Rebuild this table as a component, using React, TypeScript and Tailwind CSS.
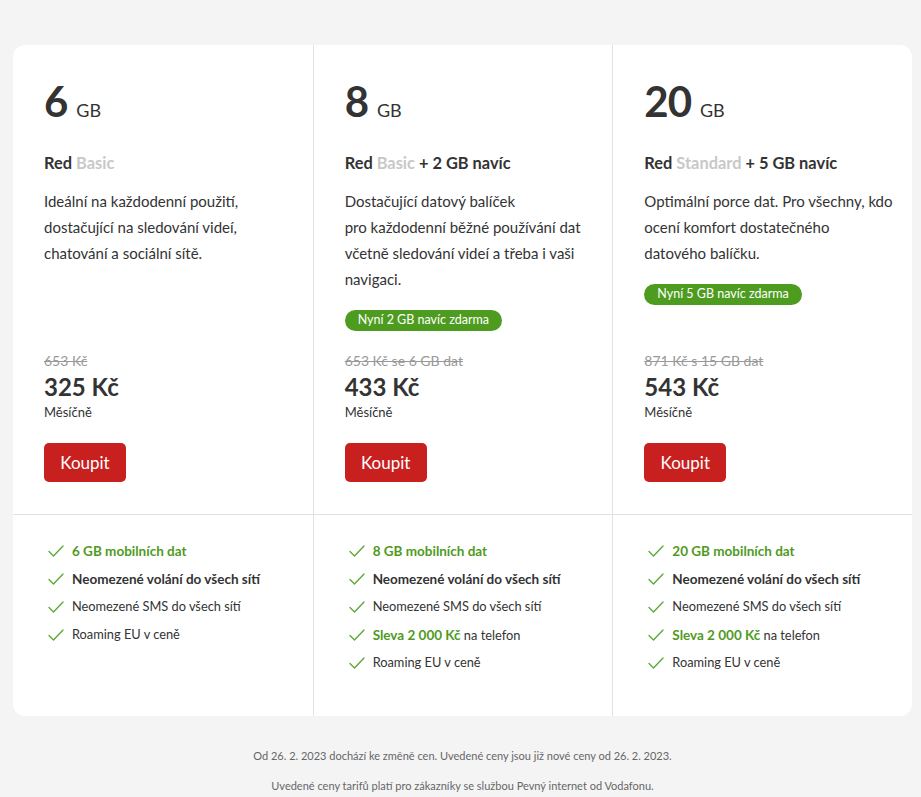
const plans = [
  {
    gb: "6",
    tier: "Basic",
    extra: "",
    desc: ["Ideální na každodenní použití,", "dostačující na sledování videí,", "chatování a sociální sítě."],
    pill: "",
    oldPrice: "653 Kč",
    price: "325 Kč",
    features: [
      { green: "6 GB mobilních dat", rest: "", bold: false },
      { green: "", rest: "Neomezené volání do všech sítí", bold: true },
      { green: "", rest: "Neomezené SMS do všech sítí", bold: false },
      { green: "", rest: "Roaming EU v ceně", bold: false },
    ],
  },
  {
    gb: "8",
    tier: "Basic",
    extra: " + 2 GB navíc",
    desc: ["Dostačující datový balíček", "pro každodenní běžné používání dat", "včetně sledování videí a třeba i vaši", "navigaci."],
    pill: "Nyní 2 GB navíc zdarma",
    oldPrice: "653 Kč se 6 GB dat",
    price: "433 Kč",
    features: [
      { green: "8 GB mobilních dat", rest: "", bold: false },
      { green: "", rest: "Neomezené volání do všech sítí", bold: true },
      { green: "", rest: "Neomezené SMS do všech sítí", bold: false },
      { green: "Sleva 2 000 Kč", rest: " na telefon", bold: false },
      { green: "", rest: "Roaming EU v ceně", bold: false },
    ],
  },
  {
    gb: "20",
    tier: "Standard",
    extra: " + 5 GB navíc",
    desc: ["Optimální porce dat. Pro všechny, kdo", "ocení komfort dostatečného", "datového balíčku."],
    pill: "Nyní 5 GB navíc zdarma",
    oldPrice: "871 Kč s 15 GB dat",
    price: "543 Kč",
    features: [
      { green: "20 GB mobilních dat", rest: "", bold: false },
      { green: "", rest: "Neomezené volání do všech sítí", bold: true },
      { green: "", rest: "Neomezené SMS do všech sítí", bold: false },
      { green: "Sleva 2 000 Kč", rest: " na telefon", bold: false },
      { green: "", rest: "Roaming EU v ceně", bold: false },
    ],
  },
];

function Check() {
  return (
    <svg width="16" height="12" viewBox="0 0 16 12" fill="none" className="shrink-0">
      <path d="M1 6.5 L5.5 11 L15 1" stroke="#5fa83a" strokeWidth="1.4" strokeLinecap="round" strokeLinejoin="round" />
    </svg>
  );
}

export default function App() {
  return (
    <div className="min-h-screen bg-[#f4f4f4] pt-[45px] px-[13px] pr-[9px] font-['Lato','Open_Sans',sans-serif] text-[#333]">
      <div className="bg-white rounded-[12px] grid grid-cols-3">
        {plans.map((p, i) => (
          <div
            key={"top" + i}
            className={`flex flex-col pl-[31px] pr-4 pt-[35px] pb-[32px] ${i > 0 ? "border-l border-[#e2e2e2]" : ""}`}
          >
            <div className="flex items-baseline gap-[9px]">
              <span className="text-[42px] font-bold leading-none tracking-tight">{p.gb}</span>
              <span className="text-[18px] leading-none">GB</span>
            </div>
            <div className="mt-[29px] text-[16.4px] font-bold leading-6">
              Red <span className="text-[#c8c8c8]">{p.tier}</span>
              {p.extra}
            </div>
            <div className="mt-[13px] text-[15px] leading-[26px]">
              {p.desc.map((l) => (
                <div key={l}>{l}</div>
              ))}
            </div>
            {p.pill && (
              <div className="mt-[18px] self-start rounded-full bg-[#4e9c1f] px-[13px] h-[21px] flex items-center text-[12.5px] text-white">
                {p.pill}
              </div>
            )}
            <div className="mt-auto pt-[20px]">
              <div className="text-[14px] text-[#999] line-through leading-5">{p.oldPrice}</div>
              <div className="text-[24px] font-bold leading-[30px] mt-[1px]">{p.price}</div>
              <div className="text-[13px] leading-5">Měsíčně</div>
              <button className="mt-[21px] h-[39px] w-[82px] rounded-[5px] bg-[#c8201f] text-white text-[17px]">
                Koupit
              </button>
            </div>
          </div>
        ))}
        {plans.map((p, i) => (
          <div
            key={"feat" + i}
            className={`border-t border-[#e2e2e2] pl-[35px] pr-3 pt-[25px] pb-[42px] flex flex-col gap-[6px] ${i > 0 ? "border-l" : ""}`}
          >
            {p.features.map((f, j) => (
              <div key={j} className="flex items-center gap-[8px] h-[22px]">
                <Check />
                <span className={f.bold ? "font-bold text-[13.5px]" : "text-[12.8px]"}>
                  {f.green && <span className="font-bold text-[13.5px] text-[#4f9a22]">{f.green}</span>}
                  {f.rest}
                </span>
              </div>
            ))}
          </div>
        ))}
      </div>
      <div className="text-center text-[11px] text-[#666] pt-[30px] leading-5">
        <p>Od 26. 2. 2023 dochází ke změně cen. Uvedené ceny jsou již nové ceny od 26. 2. 2023.</p>
        <p className="mt-[10px]">Uvedené ceny tarifů platí pro zákazníky se službou Pevný internet od Vodafonu.</p>
      </div>
    </div>
  );
}
